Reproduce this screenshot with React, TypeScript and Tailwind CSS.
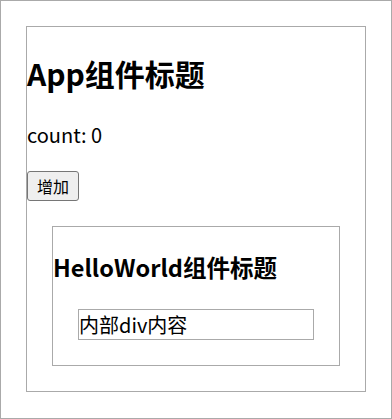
import { useState } from 'react';

const font = { fontFamily: '"Noto Sans CJK SC", "Noto Sans", sans-serif' };

function HelloWorld() {
  return (
    <div className="m-[25px] border border-[#aaa]">
      <h2 className="mt-[23px] text-[23.5px] font-bold leading-[34px]">HelloWorld组件标题</h2>
      <div className="m-[25px] border border-[#aaa] text-[20px] leading-[29px]">内部div内容</div>
    </div>
  );
}

export default function App() {
  const [count, setCount] = useState(0);

  return (
    <div className="box-border h-[419px] border border-[#aaa] bg-white pt-px text-black" style={font}>
      <div className="mx-[25px] mt-[24px] border border-[#aaa]">
        <h1 className="mt-[24px] text-[30px] font-bold leading-[44px]">App组件标题</h1>
        <p className="mt-[25px] text-[20px] leading-[29px]">count: {count}</p>
        <button
          className="mt-[22px] block h-[30px] rounded-[3px] border border-[#767676] bg-[#efefef] px-[9px] text-[16px] leading-[22px]"
          onClick={() => setCount(count + 1)}
        >
          增加
        </button>
        <HelloWorld />
      </div>
    </div>
  );
}
